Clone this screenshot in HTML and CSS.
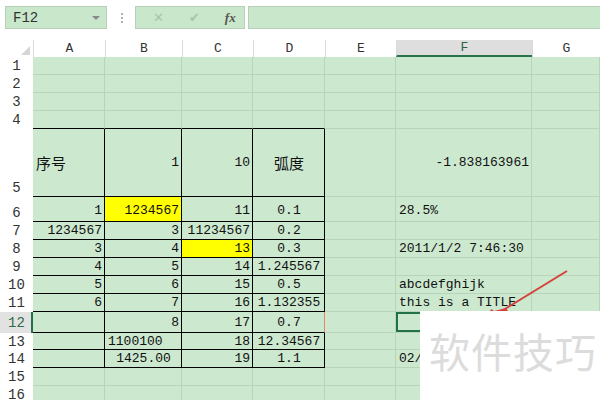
FILE: index.html
```html
<html>
  <head>
    <meta charset="utf-8" />
    <link rel="stylesheet" href="styles.css">
  </head>
  <body>
    <div class="app">
      <div class="toolbar">
        <div class="namebox">
          <span>F12</span>
          <span class="caret"></span>
        </div>
        <div class="dots"><i></i><i></i><i></i></div>
        <div class="fxgroup">
          <span class="btn x">&#x2715;</span>
          <span class="btn ok">&#x2714;</span>
          <span class="btn fx">fx</span>
        </div>
        <div class="formula"></div>
      </div>

      <div class="sheet">
        <div class="corner"><span class="tri"></span></div>
        <div class="h">A</div>
        <div class="h">B</div>
        <div class="h">C</div>
        <div class="h">D</div>
        <div class="h">E</div>
        <div class="h hsel">F</div>
        <div class="h">G</div>

        <div class="rh">1</div>
        <div class="c"></div><div class="c"></div><div class="c"></div><div class="c"></div><div class="c"></div><div class="c"></div><div class="c"></div>
        <div class="rh">2</div>
        <div class="c"></div><div class="c"></div><div class="c"></div><div class="c"></div><div class="c"></div><div class="c"></div><div class="c"></div>
        <div class="rh">3</div>
        <div class="c"></div><div class="c"></div><div class="c"></div><div class="c"></div><div class="c"></div><div class="c"></div><div class="c"></div>
        <div class="rh">4</div>
        <div class="c top"></div><div class="c top"></div><div class="c top"></div><div class="c top"></div><div class="c"></div><div class="c"></div><div class="c"></div>

        <div class="rh end">5</div>
        <div class="c b l cjk">序号</div>
        <div class="c b r">1</div>
        <div class="c b r">10</div>
        <div class="c b m cjk">弧度</div>
        <div class="c"></div>
        <div class="c r">-1.838163961</div>
        <div class="c"></div>

        <div class="rh end">6</div>
        <div class="c b r low">1</div>
        <div class="c b r low yellow">1234567</div>
        <div class="c b r low">11</div>
        <div class="c b m low">0.1</div>
        <div class="c"></div>
        <div class="c l low">28.5%</div>
        <div class="c"></div>

        <div class="rh">7</div>
        <div class="c b r">1234567</div>
        <div class="c b r">3</div>
        <div class="c b r">11234567</div>
        <div class="c b m">0.2</div>
        <div class="c"></div><div class="c"></div><div class="c"></div>

        <div class="rh">8</div>
        <div class="c b r">3</div>
        <div class="c b r">4</div>
        <div class="c b r yellow">13</div>
        <div class="c b m">0.3</div>
        <div class="c"></div>
        <div class="c l">2011/1/2 7:46:30</div>
        <div class="c"></div>

        <div class="rh">9</div>
        <div class="c b r">4</div>
        <div class="c b r">5</div>
        <div class="c b r">14</div>
        <div class="c b m">1.245567</div>
        <div class="c"></div><div class="c"></div><div class="c"></div>

        <div class="rh">10</div>
        <div class="c b r">5</div>
        <div class="c b r">6</div>
        <div class="c b r">15</div>
        <div class="c b m">0.5</div>
        <div class="c"></div>
        <div class="c l">abcdefghijk</div>
        <div class="c"></div>

        <div class="rh">11</div>
        <div class="c b r">6</div>
        <div class="c b r">7</div>
        <div class="c b r">16</div>
        <div class="c b m">1.132355</div>
        <div class="c"></div>
        <div class="c l">this is a TITLE</div>
        <div class="c"></div>

        <div class="rh rsel">12</div>
        <div class="c b"></div>
        <div class="c b r">8</div>
        <div class="c b r">17</div>
        <div class="c b m mark">0.7</div>
        <div class="c"></div>
        <div class="c sel"></div>
        <div class="c"></div>

        <div class="rh">13</div>
        <div class="c b"></div>
        <div class="c b l">1100100</div>
        <div class="c b r">18</div>
        <div class="c b m">12.34567</div>
        <div class="c"></div><div class="c"></div><div class="c"></div>

        <div class="rh">14</div>
        <div class="c b"></div>
        <div class="c b m">1425.00</div>
        <div class="c b r">19</div>
        <div class="c b m">1.1</div>
        <div class="c"></div>
        <div class="c l">02/</div>
        <div class="c"></div>

        <div class="rh">15</div>
        <div class="c"></div><div class="c"></div><div class="c"></div><div class="c"></div><div class="c"></div><div class="c"></div><div class="c"></div>
        <div class="rh">16</div>
        <div class="c"></div><div class="c"></div><div class="c"></div><div class="c"></div><div class="c"></div><div class="c"></div><div class="c"></div>
      </div>

      <svg class="arrow" width="600" height="400" viewBox="0 0 600 400">
        <line x1="567" y1="271" x2="500" y2="312" stroke="#d4433c" stroke-width="2" />
        <polygon points="486,322 491,309 494,311 506,308 508,311" fill="#d4433c" />
      </svg>

      <div class="watermark">软件技巧</div>
    </div>
  </body>
</html>
```

FILE: styles.css
```css
body {
  margin: 0;
  background: #fff;
  font-family: "Liberation Mono", "Noto Sans CJK SC", monospace;
  font-size: 13px;
  color: #111;
}
.app {
  position: relative;
  width: 600px;
  height: 400px;
  overflow: hidden;
}

/* formula bar */
.toolbar {
  display: flex;
  align-items: center;
  height: 23px;
  padding: 6px 0 11px 5px;
}
.namebox {
  display: flex;
  align-items: center;
  justify-content: space-between;
  box-sizing: border-box;
  width: 102px;
  height: 23px;
  padding: 0 6px 0 7px;
  background: #c9e7cb;
  border: 1px solid #b7ceb9;
  color: #333;
  font-size: 14px;
}
.caret {
  width: 0;
  height: 0;
  border-left: 4px solid transparent;
  border-right: 4px solid transparent;
  border-top: 4px solid #8a8a8a;
}
.dots {
  display: flex;
  flex-direction: column;
  gap: 2px;
  margin: 0 12px 0 14px;
}
.dots i {
  width: 2px;
  height: 2px;
  background: #b0b0b0;
}
.fxgroup {
  display: flex;
  align-items: center;
  box-sizing: border-box;
  width: 110px;
  height: 23px;
  background: #c9e7cb;
  border: 1px solid #b7ceb9;
}
.btn {
  font-family: "DejaVu Sans", sans-serif;
  color: #a9c3ab;
  font-size: 13px;
}
.x { margin-left: 17px; }
.ok { margin-left: 25px; }
.fx {
  margin-left: 25px;
  font-family: "Liberation Serif", serif;
  font-style: italic;
  font-weight: bold;
  color: #555;
  font-size: 13px;
}
.formula {
  flex: 1;
  height: 23px;
  margin-left: 3px;
  box-sizing: border-box;
  background: #c9e7cb;
  border: 1px solid #b7ceb9;
  border-right: none;
}

/* grid */
.sheet {
  display: grid;
  grid-template-columns: 33px 72px 77px 71px 72px 71px 136px 68px;
  grid-template-rows: 17px 18px 18px 18px 18px 68px 25px 18px 18px 18px 18px 18px 21px 17px 18px 18px 18px;
}
.corner {
  position: relative;
  background: #fff;
}
.tri {
  position: absolute;
  right: 3px;
  bottom: 2px;
  width: 0;
  height: 0;
  border-left: 9px solid transparent;
  border-bottom: 9px solid #d6d6d6;
}
.h {
  display: flex;
  align-items: center;
  justify-content: center;
  border-left: 1px solid #dadada;
  color: #333;
  background: #fff;
}
.hsel {
  background: #dedede;
  border-bottom: 2px solid #2a7449;
  color: #2f5f45;
}
.rh {
  display: flex;
  align-items: center;
  justify-content: center;
  background: #fff;
  color: #333;
  font-size: 14px;
}
.rh.end {
  align-items: flex-end;
  padding-bottom: 1px;
}
.rsel {
  background: #e2e2e2;
  color: #2e6a47;
  box-shadow: inset -2px 0 0 #217346;
}

.c {
  display: flex;
  align-items: center;
  box-sizing: border-box;
  padding: 0 2px 0 3px;
  background: #cce8cf;
  border-right: 1px solid #b8d5bb;
  border-bottom: 1px solid #b8d5bb;
  white-space: nowrap;
}
.c.top { border-bottom-color: #000; }
.c.b {
  border-right-color: #000;
  border-bottom-color: #000;
}
.c.mark { border-right-color: #e8856f; }
.r { justify-content: flex-end; }
.l { justify-content: flex-start; }
.m { justify-content: center; }
.low {
  align-items: flex-end;
  padding-bottom: 3px;
}
.cjk {
  font-family: "Noto Sans CJK SC", sans-serif;
  font-size: 15px;
}
.yellow { background: #ffff00; }
.sel { box-shadow: inset 0 0 0 2px #217346; }

/* screenshot overlays */
.arrow {
  position: absolute;
  left: 0;
  top: 0;
}
.watermark {
  position: absolute;
  left: 420px;
  top: 311px;
  width: 180px;
  height: 89px;
  box-sizing: border-box;
  padding: 19px 0 0 9px;
  background: #fff;
  color: #dcdcdc;
  font-family: "Noto Sans CJK SC", sans-serif;
  font-size: 41px;
  line-height: 1;
  letter-spacing: 1px;
  white-space: nowrap;
}
```
